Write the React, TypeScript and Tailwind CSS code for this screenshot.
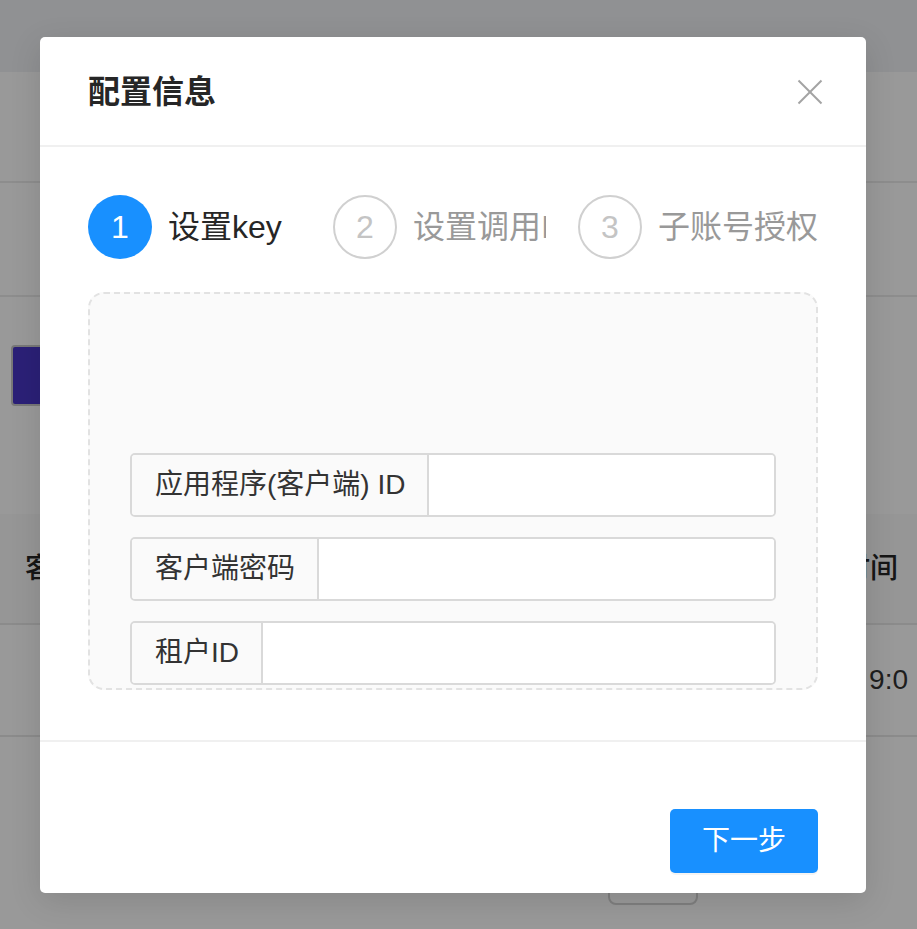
import React from "react";

function StepCircle({ n, active }: { n: number; active?: boolean }) {
  return active ? (
    <div className="w-16 h-16 shrink-0 rounded-full bg-[#1890ff] text-white text-[32px] leading-none flex items-center justify-center">
      {n}
    </div>
  ) : (
    <div className="w-16 h-16 shrink-0 rounded-full border-2 border-[#d0d0d0] text-[#c4c4c4] text-[32px] leading-none flex items-center justify-center">
      {n}
    </div>
  );
}

function InputGroup({ label }: { label: string }) {
  return (
    <div className="flex h-[64px] border-2 border-[#d9d9d9] rounded-[5px] overflow-hidden">
      <div className="bg-[#fafafa] pl-[23px] pr-[22px] flex items-center border-r-2 border-[#d9d9d9] text-[28px] text-[#333333] whitespace-nowrap">
        {label}
      </div>
      <div className="flex-1 bg-white" />
    </div>
  );
}

export default function App() {
  return (
    <div className="relative w-[917px] h-[929px] overflow-hidden bg-white font-['Liberation_Sans','Noto_Sans_CJK_SC',sans-serif]">
      {/* background page */}
      <div className="flex flex-col">
        <div className="h-[72px] bg-[#f0f2f5]" />
        <div className="h-[111px] border-b-2 border-[#ebebeb]" />
        <div className="h-[114px] border-b-2 border-[#ebebeb]" />
        <div className="h-[217px] pt-[48px] pl-[11px]">
          <div className="w-[140px] h-[61px] bg-[#4836c6] border-2 border-[#c8c8c8] rounded-[4px]" />
        </div>
        <div className="h-[111px] bg-[#fbfbfb] border-b-2 border-[#e8e8e8] flex items-center justify-between pl-[25px] pr-[19px] text-[28px] font-medium text-[#262626]">
          <span>客户</span>
          <span>创建时间</span>
        </div>
        <div className="h-[112px] border-b-2 border-[#e8e8e8] flex items-center justify-end pr-[9px] text-[28px] text-[#333333]">
          <span className="whitespace-nowrap">2023-05-10 9:0</span>
        </div>
        <div className="pt-[123px] pl-[608px]">
          <div className="w-[90px] h-[45px] border-2 border-[#d4d4d4] rounded-b-[8px] bg-white" />
        </div>
      </div>

      {/* mask */}
      <div className="absolute inset-0 bg-black/40" />

      {/* modal */}
      <div className="absolute left-[40px] top-[37px] w-[826px] bg-white rounded-[5px] shadow-[0_8px_32px_rgba(0,0,0,0.12)]">
        <div className="h-[110px] pl-[48px] pr-[40px] flex items-center justify-between border-b-2 border-[#f0f0f0]">
          <div className="text-[32px] font-bold text-[#262626] leading-none mt-[2px]">配置信息</div>
          <svg width="32" height="32" viewBox="0 0 32 32" className="mt-[2px]">
            <line x1="4.5" y1="4.5" x2="27.5" y2="27.5" stroke="#a3a3a3" strokeWidth="2" />
            <line x1="27.5" y1="4.5" x2="4.5" y2="27.5" stroke="#a3a3a3" strokeWidth="2" />
          </svg>
        </div>

        <div className="px-[48px] pt-[48px] pb-[50px]">
          <div className="flex items-center h-[64px]">
            <div className="flex-1 mr-8 overflow-hidden flex items-center">
              <StepCircle n={1} active />
              <div className="ml-4 text-[32px] text-[#262626] whitespace-nowrap leading-none">设置key</div>
            </div>
            <div className="flex-1 mr-8 overflow-hidden flex items-center">
              <StepCircle n={2} />
              <div className="ml-4 text-[32px] text-[#999999] whitespace-nowrap leading-none">设置调用ID</div>
            </div>
            <div className="flex-none flex items-center">
              <StepCircle n={3} />
              <div className="ml-4 text-[32px] text-[#999999] whitespace-nowrap leading-none">子账号授权</div>
            </div>
          </div>

          <div className="mt-[33px] h-[398px] border-2 border-dashed border-[#e2e2e2] rounded-[16px] bg-[#fafafa] px-[40px] pb-[3px] flex flex-col justify-end gap-[20px]">
            <InputGroup label="应用程序(客户端) ID" />
            <InputGroup label="客户端密码" />
            <InputGroup label="租户ID" />
          </div>
        </div>

        <div className="border-t-2 border-[#f0f0f0] flex justify-end pt-[67px] pb-[20px] pr-[48px]">
          <button className="w-[148px] h-[64px] bg-[#1890ff] rounded-[5px] text-white text-[28px] flex items-center justify-center shadow-[0_2px_0_rgba(0,0,0,0.045)]">
            下一步
          </button>
        </div>
      </div>
    </div>
  );
}
